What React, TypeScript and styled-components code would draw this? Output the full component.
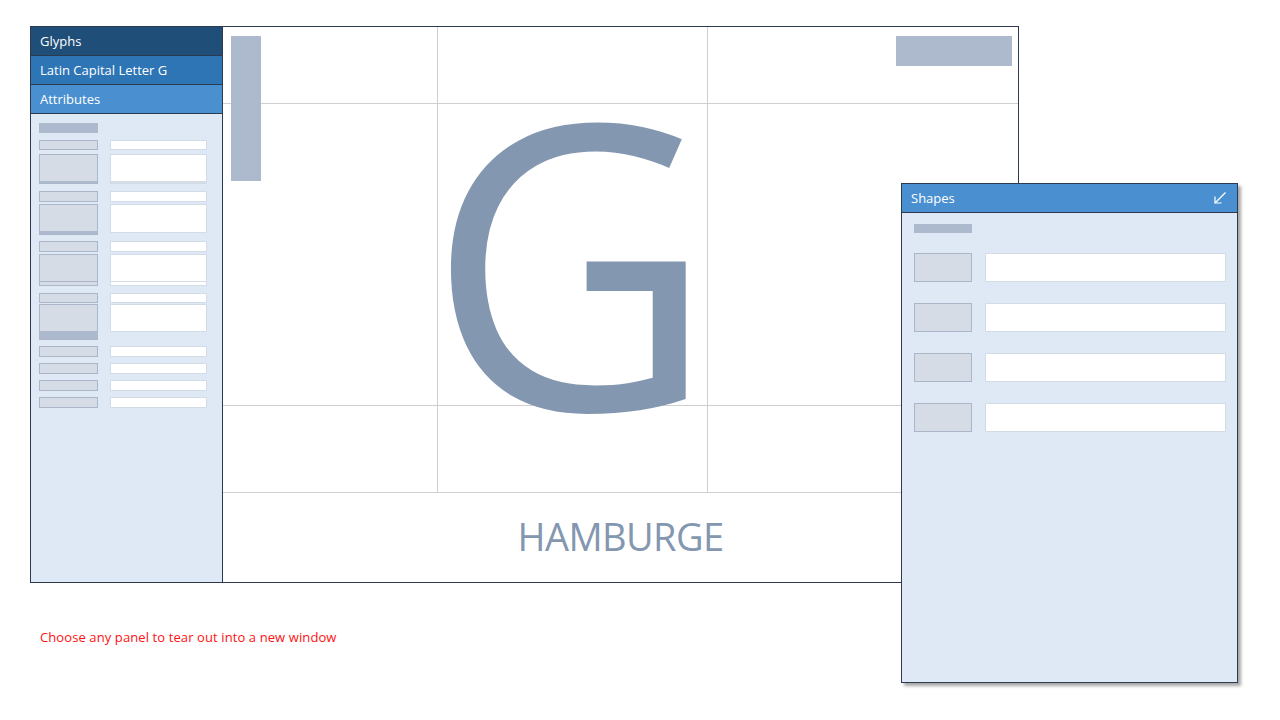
import React from 'react';
import styled, { createGlobalStyle } from 'styled-components';

const GlobalStyle = createGlobalStyle`
  html, body { margin: 0; padding: 0; background: #ffffff; }
  body { font-family: "Open Sans", "Noto Sans", sans-serif; }
  * { box-sizing: border-box; }
`;

const Page = styled.div`
  position: relative;
  width: 1280px;
  height: 720px;
  padding: 26px 0 0 30px;
  overflow: hidden;
`;

const Frame = styled.div`
  display: flex;
  width: 989px;
  height: 557px;
  border: 1px solid #2b3a4f;
`;

const Sidebar = styled.div`
  flex: none;
  width: 192px;
  border-right: 1px solid #2b3a4f;
  background: #dee9f5;
  display: flex;
  flex-direction: column;
`;

const Header = styled.div<{ $tone: string }>`
  flex: none;
  height: 29px;
  border-bottom: 1px solid #2b3a4f;
  background: ${(p) => p.$tone};
  color: #ffffff;
  font-size: 13px;
  display: flex;
  align-items: center;
  justify-content: space-between;
  padding: 0 10px 0 9px;
`;

const PropList = styled.div`
  display: flex;
  flex-direction: column;
  padding: 9px 0 0 8px;
`;

const HeadingBar = styled.div<{ $w: number; $h: number }>`
  width: ${(p) => p.$w}px;
  height: ${(p) => p.$h}px;
  background: #adb9cc;
`;

const PropRow = styled.div<{ $top: number; $gap: number }>`
  display: flex;
  align-items: flex-start;
  gap: ${(p) => p.$gap}px;
  margin-top: ${(p) => p.$top}px;
`;

const LabelBox = styled.div<{ $w: number; $h: number; $band: number; $split: number }>`
  flex: none;
  width: ${(p) => p.$w}px;
  height: ${(p) => p.$h}px;
  border: 1px solid #abb6c8;
  background: ${(p) =>
    p.$split
      ? `linear-gradient(to top, #d5dce6 0 ${p.$split}px, #abb6c8 ${p.$split}px ${p.$split + 1}px, #d5dce6 ${p.$split + 1}px)`
      : `linear-gradient(to top, #adb9cc 0 ${p.$band}px, #d5dce6 ${p.$band}px)`};
`;

const FieldBox = styled.div<{ $w: number; $h: number; $band: number; $split: number }>`
  flex: none;
  width: ${(p) => p.$w}px;
  height: ${(p) => p.$h}px;
  border: 1px solid #d3dbe6;
  background: ${(p) =>
    p.$split
      ? `linear-gradient(to top, #ffffff 0 ${p.$split}px, #d3dbe6 ${p.$split}px ${p.$split + 1}px, #ffffff ${p.$split + 1}px)`
      : `linear-gradient(to top, #d5dce6 0 ${p.$band}px, #ffffff ${p.$band}px)`};
`;

const Canvas = styled.div`
  position: relative;
  flex: 1;
  display: grid;
  grid-template-columns: 215px 270px 1fr;
  grid-template-rows: 77px 302px 87px 1fr;
  background: #ffffff;
`;

const Cell = styled.div<{ $row: number; $col: number }>`
  grid-row: ${(p) => p.$row};
  grid-column: ${(p) => p.$col};
  border-bottom: 1px solid #cfcfcf;
  border-right: ${(p) => (p.$col === 3 ? 'none' : '1px solid #cfcfcf')};
`;

const GlyphArea = styled.div`
  grid-row: 1 / 3;
  grid-column: 2;
  display: flex;
  justify-content: center;
  align-items: flex-end;
  z-index: 1;
  pointer-events: none;
`;

const Glyph = styled.span`
  font-family: "Open Sans", sans-serif;
  font-size: 397px;
  line-height: 300px;
  color: #8497b0;
  margin-bottom: 0px;
  margin-left: -4px;
`;

const Sample = styled.div`
  grid-row: 4;
  grid-column: 1 / -1;
  display: flex;
  align-items: center;
  justify-content: center;
  padding-bottom: 3px;
  font-family: "Open Sans", sans-serif;
  font-size: 38px;
  line-height: 44px;
  color: #8497b0;
  letter-spacing: -0.6px;
`;

const Marker = styled.div<{ $w: number; $h: number }>`
  position: absolute;
  top: 9px;
  width: ${(p) => p.$w}px;
  height: ${(p) => p.$h}px;
  background: #adb9cc;
  z-index: 2;
`;

const LeftMarker = styled(Marker)`
  left: 8px;
`;

const RightMarker = styled(Marker)`
  right: 6px;
`;

const Note = styled.div`
  margin: 46px 0 0 10px;
  font-size: 13px;
  line-height: 17px;
  letter-spacing: 0.1px;
  color: #ff1111;
`;

const FloatPanel = styled.div`
  position: absolute;
  left: 901px;
  top: 183px;
  width: 337px;
  height: 500px;
  border: 1px solid #2b3a4f;
  background: #dee9f5;
  box-shadow: 3px 3px 3px rgba(0, 0, 0, 0.35);
  display: flex;
  flex-direction: column;
`;

const ShapeList = styled.div`
  display: flex;
  flex-direction: column;
  padding: 11px 11px 0 12px;
`;

const ShapeRow = styled.div<{ $top: number }>`
  display: flex;
  gap: 13px;
  margin-top: ${(p) => p.$top}px;
`;

const ShapeLabel = styled.div`
  flex: none;
  width: 58px;
  height: 29px;
  border: 1px solid #abb6c8;
  background: #d5dce6;
`;

const ShapeField = styled.div`
  flex: 1;
  height: 29px;
  border: 1px solid #d3dbe6;
  background: #ffffff;
`;

const DockIcon = () => (
  <svg width="14" height="14" viewBox="0 0 14 14" fill="none" stroke="#ffffff" strokeWidth="1.2">
    <path d="M12.5 1.5 L2 12" />
    <path d="M2 5.5 V12 H8.5" />
  </svg>
);

type Prop = {
  top: number;
  h: number;
  band?: number;
  split?: number;
  fh?: number;
  fband?: number;
  fsplit?: number;
};

const props: Prop[] = [
  { top: 7, h: 10 },
  { top: 4, h: 30, band: 2, fh: 30, fband: 2 },
  { top: 7, h: 11 },
  { top: 2, h: 31, band: 3, fh: 29 },
  { top: 6, h: 11 },
  { top: 2, h: 32, split: 3, fh: 32, fsplit: 3 },
  { top: 7, h: 10 },
  { top: 1, h: 36, band: 8, fh: 28 },
  { top: 6, h: 11 },
  { top: 6, h: 11 },
  { top: 6, h: 11 },
  { top: 6, h: 11 },
];

const shapeRows = [20, 21, 21, 21];

const cells = [1, 2, 3].flatMap((r) => [1, 2, 3].map((c) => ({ r, c })));

export default function App() {
  return (
    <>
      <GlobalStyle />
      <Page>
        <Frame>
          <Sidebar>
            <Header $tone="#1f4e79">Glyphs</Header>
            <Header $tone="#2e75b6">Latin Capital Letter G</Header>
            <Header $tone="#4a8fd0">Attributes</Header>
            <PropList>
              <HeadingBar $w={59} $h={10} />
              {props.map((p, i) => (
                <PropRow key={i} $top={p.top} $gap={12}>
                  <LabelBox $w={59} $h={p.h} $band={p.band ?? 0} $split={p.split ?? 0} />
                  <FieldBox $w={97} $h={p.fh ?? p.h} $band={p.fband ?? 0} $split={p.fsplit ?? 0} />
                </PropRow>
              ))}
            </PropList>
          </Sidebar>
          <Canvas>
            {cells.map(({ r, c }) => (
              <Cell key={`${r}-${c}`} $row={r} $col={c} />
            ))}
            <GlyphArea>
              <Glyph>G</Glyph>
            </GlyphArea>
            <Sample>HAMBURGE</Sample>
            <LeftMarker $w={30} $h={145} />
            <RightMarker $w={116} $h={30} />
          </Canvas>
        </Frame>
        <Note>Choose any panel to tear out into a new window</Note>
        <FloatPanel>
          <Header $tone="#4a8fd0">
            <span>Shapes</span>
            <DockIcon />
          </Header>
          <ShapeList>
            <HeadingBar $w={58} $h={9} />
            {shapeRows.map((t, i) => (
              <ShapeRow key={i} $top={t}>
                <ShapeLabel />
                <ShapeField />
              </ShapeRow>
            ))}
          </ShapeList>
        </FloatPanel>
      </Page>
    </>
  );
}
